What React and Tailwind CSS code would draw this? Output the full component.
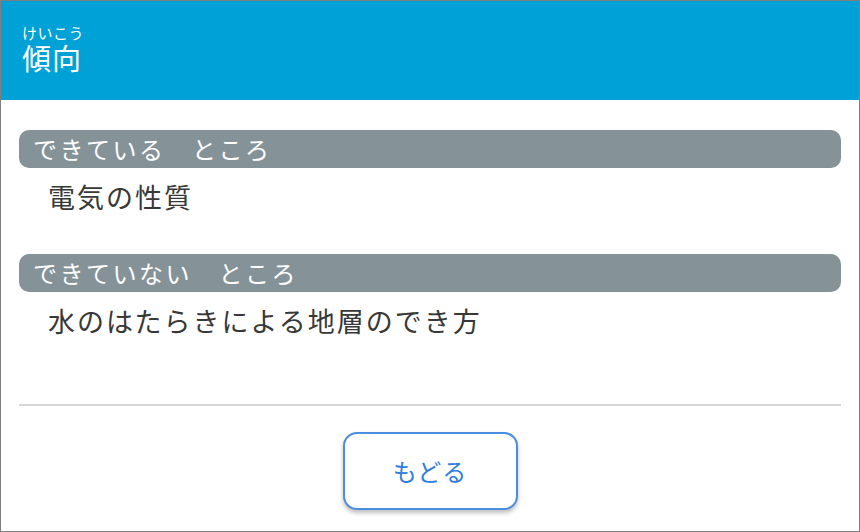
import React from 'react';

const font = { fontFamily: '"Noto Sans CJK JP", "Noto Sans", sans-serif' };

function Section({ label, text }) {
  return (
    <div>
      <div className="h-[38px] rounded-[10px] bg-[#859398] pl-[14px] flex items-center text-[24px] tracking-[2.5px] text-white leading-none">
        {label}
      </div>
      <div className="h-[56px] pl-[29px] flex items-center text-[27px] tracking-[2px] text-[#383838] leading-none">
        {text}
      </div>
    </div>
  );
}

export default function App() {
  return (
    <div style={font} className="w-[860px] h-[532px] border border-[#7f7f7f] bg-white flex flex-col overflow-hidden">
      {/* ヘッダー */}
      <header className="h-[99px] bg-[#00a1d6] pl-[21px] pt-[24px] text-white flex flex-col items-start">
        <span className="text-[15px] tracking-[0.5px] leading-[15px]">けいこう</span>
        <h1 className="mt-[3px] text-[29px] tracking-[1px] leading-[29px]">傾向</h1>
      </header>

      <main className="px-[18px] pt-[30px] flex flex-col">
        <Section label="できている　ところ" text="電気の性質" />
        <div className="h-[30px]" />
        <Section label="できていない　ところ" text="水のはたらきによる地層のでき方" />
        <div className="mt-[56px] border-t-2 border-[#d6d6d6]" />
        <div className="flex justify-center pt-[26px]">
          <button className="w-[175px] h-[78px] rounded-[14px] border-2 border-[#4a8fdf] bg-white shadow-[0_3px_4px_rgba(0,0,0,0.25)] text-[24px] tracking-[1px] text-[#2f7de0]">
            もどる
          </button>
        </div>
      </main>
    </div>
  );
}
